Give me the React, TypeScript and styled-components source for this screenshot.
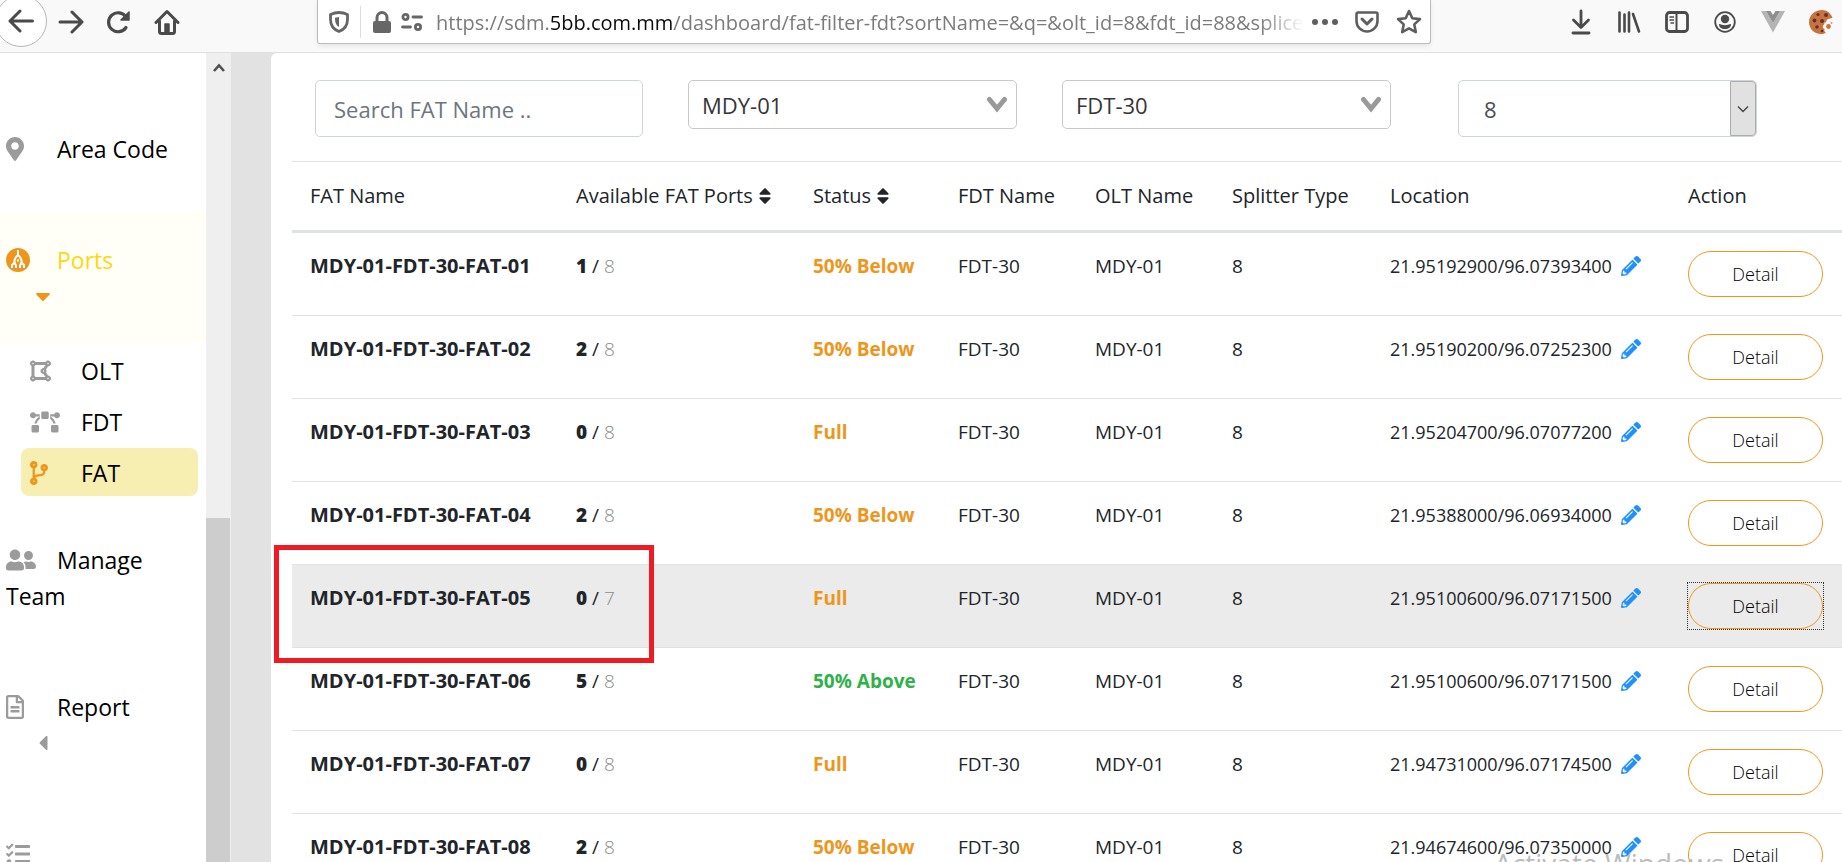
import React from "react";
import styled, { createGlobalStyle } from "styled-components";
import {
  FaBezierCurve,
  FaCaretDown,
  FaCaretLeft,
  FaCodeBranch,
  FaDrawPolygon,
  FaMapMarkerAlt,
  FaPencilAlt,
  FaRegFileAlt,
  FaSort,
  FaTasks,
  FaUserFriends,
} from "react-icons/fa";

const ORANGE = "#ee961c";
const GREEN = "#2fb14a";
const MUTED = "#9b9b9b";
const LINE = "#dee2e6";

const GlobalStyle = createGlobalStyle`
  *, *::before, *::after { box-sizing: border-box; }
  body {
    margin: 0;
    background: #fff;
    color: #212529;
    font-family: "Open Sans", "Noto Sans", sans-serif;
    font-size: 18px;
  }
  button, input, select { font: inherit; color: inherit; }
`;

const Window = styled.div`
  position: relative;
  display: flex;
  flex-direction: column;
  height: 100vh;
  overflow: hidden;
`;

/* ---------- Browser toolbar ---------- */

const Toolbar = styled.header`
  flex: none;
  display: flex;
  justify-content: space-between;
  height: 53px;
  background: #f9f9fa;
  border-bottom: 1px solid #e0e0e1;
`;

const NavButtons = styled.nav`
  flex: none;
  display: flex;
  align-items: center;
  width: 317px;
  height: 44px;
`;

const ToolButton = styled.button`
  flex: none;
  display: flex;
  align-items: center;
  justify-content: center;
  width: 48px;
  height: 44px;
  padding: 0;
  border: 0;
  background: none;
  color: #4a4a4b;
`;

const BackButton = styled(ToolButton)`
  width: 52px;
  height: 52px;
  margin: -2px 0 0 -5px;
  border: 1px solid #b6b6b7;
  border-radius: 50%;
  background: #fff;
`;

const UrlBar = styled.div`
  flex: 0 1 1114px;
  display: flex;
  align-items: center;
  min-width: 0;
  height: 44px;
  padding: 0 0 0 9px;
  border: 1px solid #bcbcbc;
  border-top: 0;
  border-radius: 0 0 3px 3px;
  background: #fff;
  box-shadow: 0 2px 5px rgba(0, 0, 0, 0.08);
  color: #666;
`;

const UrlIcon = styled.span`
  flex: none;
  display: flex;
  justify-content: center;
  width: ${(p: { $w?: number }) => p.$w ?? 24}px;
`;

const UrlDivider = styled.span`
  width: 1px;
  height: 32px;
  margin: 0 9px;
  background: #dcdcdc;
`;

const UrlText = styled.div`
  flex: 1;
  min-width: 0;
  margin-left: 6px;
  padding-top: 2px;
  overflow: hidden;
  white-space: nowrap;
  font-size: 20px;
  line-height: 28px;
  color: #7b7b7b;
  mask-image: linear-gradient(to right, #000 calc(100% - 44px), transparent);

  b {
    font-weight: 400;
    color: #0c0c0d;
  }
`;

const UrlButton = styled(ToolButton)`
  width: 42px;
  color: #5e5e5f;
`;

const ToolbarEnd = styled.div`
  flex: none;
  display: flex;
  align-items: center;
  width: 285px;
  height: 44px;
  margin-left: 126px;
`;

/* ---------- Page ---------- */

const Page = styled.div`
  flex: 1;
  display: flex;
  min-height: 0;
  background: #e2e2e2;
`;

const Sidebar = styled.aside`
  flex: none;
  width: 206px;
  padding-top: 47px;
  overflow: hidden;
  background: #fff;
`;

const Menu = styled.ul`
  margin: 0;
  padding: 0;
  list-style: none;
  display: flex;
  flex-direction: column;
  gap: 15px;
`;

const MenuLink = styled.a`
  display: block;
  padding: 31px 6px 29px;
  background: ${(p: { $active?: boolean }) => (p.$active ? "#fffff7" : "none")};
  color: ${(p: { $active?: boolean }) => (p.$active ? "#ffd60f" : "#000")};
  font-size: 23px;
  line-height: 36px;
  text-decoration: none;
`;

const MenuIcon = styled.span`
  display: inline-block;
  width: 51px;
  height: 24px;
  line-height: 0;
  vertical-align: -3px;
  color: ${(p: { $active?: boolean; $w?: number }) => (p.$active ? ORANGE : MUTED)};

  svg {
    width: ${(p) => p.$w ?? 24}px;
    height: 24px;
  }
`;

const MenuCaret = styled.span`
  display: flex;
  align-items: center;
  height: 36px;
  padding-left: 25px;
  font-size: 24px;
  color: ${(p: { $active?: boolean }) => (p.$active ? ORANGE : MUTED)};
`;

const SubMenu = styled.ul`
  margin: 0;
  padding: 3px 8px 0 21px;
  list-style: none;
  display: flex;
  flex-direction: column;
  gap: 3px;
`;

const SubLink = styled.a`
  display: block;
  height: 48px;
  padding: 7px 9px 5px;
  border-radius: 8px;
  background: ${(p: { $active?: boolean }) => (p.$active ? "#f7eeb1" : "none")};
  color: #000;
  font-size: 23px;
  line-height: 36px;
  text-decoration: none;
`;

const ScrollTrack = styled.div`
  flex: none;
  display: flex;
  flex-direction: column;
  align-items: center;
  justify-content: space-between;
  width: 25px;
  padding-top: 8px;
  background: #efefef;
`;

const ScrollThumb = styled.div`
  width: 24px;
  height: 43%;
  align-self: flex-start;
  background: #cdcdcd;
`;

const Content = styled.main`
  flex: 1;
  min-width: 0;
  margin-left: 40px;
  padding: 27px 0 0 21px;
  overflow: hidden;
  border-top-left-radius: 6px;
  background: #fff;
`;

const Filters = styled.form`
  display: grid;
  grid-template-columns: 328fr 329fr 329fr 321fr;
  align-items: start;
  gap: 45px;
  height: 81px;
  padding: 0 85px 0 23px;
`;

const Field = styled.label`
  position: relative;
  display: block;
  font-size: 22px;

  &:last-child {
    padding-left: 22px;
  }
`;

const SearchInput = styled.input`
  display: block;
  width: 100%;
  height: 57px;
  padding: 0 18px;
  border: 1px solid #ced4da;
  border-radius: 5px;
  background: #fff;

  &::placeholder {
    color: #6c757d;
    opacity: 1;
  }
`;

const Select = styled.select`
  display: block;
  width: 100%;
  height: ${(p: { $large?: boolean }) => (p.$large ? 57 : 49)}px;
  padding: ${(p: { $large?: boolean }) => (p.$large ? "0 25px" : "0 13px")};
  border: 1px solid ${(p: { $large?: boolean }) => (p.$large ? "#ced4da" : "#c8c8c8")};
  border-radius: 5px;
  background: #fff;
  color: ${(p: { $large?: boolean }) => (p.$large ? "#495057" : "#35353a")};
  appearance: none;
`;

const SelectChevron = styled.svg`
  position: absolute;
  right: 9px;
  top: 16px;
  pointer-events: none;
`;

const SelectArrow = styled.span`
  position: absolute;
  right: 1px;
  top: 1px;
  bottom: 1px;
  display: flex;
  align-items: center;
  justify-content: center;
  width: 26px;
  border: 1px solid #adadad;
  border-radius: 0 4px 4px 0;
  background: #e1e1e1;
  pointer-events: none;
`;

const TableArea = styled.section`
  position: relative;
`;

const Table = styled.table`
  width: 100%;
  table-layout: fixed;
  border-collapse: separate;
  border-spacing: 0;
  line-height: 30px;
`;

const HeadCell = styled.th`
  height: 72px;
  padding: 0 0 0 18px;
  border-top: 1px solid ${LINE};
  border-bottom: 3px solid ${LINE};
  font-size: 20px;
  font-weight: 400;
  text-align: left;
  white-space: nowrap;
`;

const SortButton = styled.button`
  display: inline-flex;
  align-items: center;
  gap: 2px;
  padding: 0;
  border: 0;
  background: none;
`;

const Row = styled.tr`
  background: ${(p: { $hovered?: boolean }) => (p.$hovered ? "#ebebeb" : "none")};
`;

const Cell = styled.td`
  height: 83px;
  padding: 18px 0 0 18px;
  border-bottom: 1px solid ${LINE};
  font-size: 19px;
  vertical-align: top;
  white-space: nowrap;
`;

const NameCell = styled(Cell)`
  font-size: 20px;
  font-weight: 700;
`;

const LocationCell = styled(Cell)`
  font-size: 18px;
`;

const Available = styled.b`
  font-weight: 800;
`;

const Total = styled.span`
  font-weight: 300;
  color: #8c8c8c;
`;

const Status = styled.span`
  font-weight: 700;
  color: ${(p: { $good: boolean }) => (p.$good ? GREEN : ORANGE)};
`;

const EditButton = styled.button`
  margin-left: 9px;
  padding: 0;
  border: 0;
  background: none;
  color: #1e90ff;
  font-size: 20px;
  line-height: 0;
  vertical-align: -3px;
`;

const DetailButton = styled.button`
  display: block;
  width: 135px;
  height: 46px;
  padding: 0;
  border: 1px solid ${ORANGE};
  border-radius: 23px;
  background: transparent;
  color: #000;
  font-size: 18px;
  font-weight: 300;
`;

const FocusRing = styled.div`
  width: 137px;
  margin: -1px;
  border: 1px dotted #333;
`;

const Highlight = styled.div`
  position: absolute;
  top: 384px;
  left: -18px;
  width: 380px;
  height: 118px;
  border: 5px solid #ef1b24;
  pointer-events: none;
`;

const Watermark = styled.div`
  position: absolute;
  right: 118px;
  bottom: -21px;
  font-size: 28px;
  line-height: 40px;
  color: rgba(130, 130, 130, 0.55);
  pointer-events: none;
`;

/* ---------- Icons ---------- */

const stroke = {
  fill: "none",
  stroke: "currentColor",
  strokeLinecap: "round" as const,
  strokeLinejoin: "round" as const,
};

const BackIcon = () => (
  <svg width="26" height="24" viewBox="0 0 26 24" {...stroke} strokeWidth="3">
    <path d="M24.500 12H2M12 2 2 12l10 10" />
  </svg>
);

const ForwardIcon = () => (
  <svg width="26" height="24" viewBox="0 0 26 24" {...stroke} strokeWidth="3">
    <path d="M2 12h22M14 2l10 10-10 10" />
  </svg>
);

const ReloadIcon = () => (
  <svg width="26" height="24" viewBox="0 0 26 24" {...stroke} strokeWidth="3.200">
    <path d="M20 17.500A9.500 9.500 0 1 1 20 7" />
    <path d="M23 2v8h-8z" fill="currentColor" strokeWidth="1.500" />
  </svg>
);

const HomeIcon = () => (
  <svg width="26" height="26" viewBox="0 0 26 26" {...stroke} strokeWidth="3">
    <path d="M2 13.500 13 2.500l11 11M5.500 12v10.500a2 2 0 0 0 2 2h11a2 2 0 0 0 2-2V12" />
    <path d="M11 23v-8h4v8z" fill="currentColor" strokeWidth="1.500" />
  </svg>
);

const ShieldIcon = () => (
  <svg width="20" height="22" viewBox="0 0 20 22" {...stroke} strokeWidth="2.800">
    <path d="M10 1.500c3 0 6 .8 8.500 2v5c0 6-3 10-8.500 12-5.500-2-8.500-6-8.500-12v-5c2.500-1.200 5.500-2 8.500-2z" />
    <path d="M10 6v10c-2.500-1.500-4-4-4-8V6.700z" fill="currentColor" stroke="none" />
  </svg>
);

const LockIcon = () => (
  <svg width="20" height="22" viewBox="0 0 20 22" {...stroke} strokeWidth="3">
    <path d="M5 11V6.500a5 5 0 0 1 10 0V11" />
    <rect x="1" y="10" width="18" height="12" rx="2" fill="currentColor" stroke="none" />
  </svg>
);

const PermissionsIcon = () => (
  <svg width="22" height="18" viewBox="0 0 22 18" {...stroke} strokeWidth="2.800">
    <circle cx="4.500" cy="4" r="2.600" />
    <path d="M12 4h8.500M1.500 14h8" />
    <circle cx="17" cy="14" r="2.600" />
  </svg>
);

const DotsIcon = () => (
  <svg width="26" height="6" viewBox="0 0 26 6" fill="currentColor">
    <circle cx="3" cy="3" r="3" />
    <circle cx="13" cy="3" r="3" />
    <circle cx="23" cy="3" r="3" />
  </svg>
);

const PocketIcon = () => (
  <svg width="24" height="22" viewBox="0 0 24 22" {...stroke} strokeWidth="2.600">
    <path d="M3 1.500h18a1.500 1.500 0 0 1 1.500 1.500v7a10.500 10.500 0 0 1-21 0V3A1.500 1.500 0 0 1 3 1.500z" />
    <path d="m7 8 5 5 5-5" strokeWidth="3" />
  </svg>
);

const StarIcon = () => (
  <svg width="26" height="25" viewBox="0 0 26 25" {...stroke} strokeWidth="2.600">
    <path d="m13 2 3.300 7.200 7.700.9-5.700 5.300 1.500 7.700-6.800-3.800-6.800 3.800 1.500-7.700L2 10.100l7.700-.9z" />
  </svg>
);

const DownloadIcon = () => (
  <svg width="22" height="26" viewBox="0 0 22 26" {...stroke} strokeWidth="2.800">
    <path d="M11 2v16M3.500 11l7.500 7.500 7.500-7.500M3 24h16" />
  </svg>
);

const LibraryIcon = () => (
  <svg width="24" height="24" viewBox="0 0 24 24" {...stroke} strokeWidth="2.600">
    <path d="M2.500 2.500v19M7.500 4.500v17M12 2.500v19M16 4l6 17.500" />
  </svg>
);

const SidebarIcon = () => (
  <svg width="24" height="22" viewBox="0 0 24 22" {...stroke} strokeWidth="2.800">
    <rect x="1.500" y="1.500" width="21" height="19" rx="3" />
    <path d="M11.500 2v18" strokeWidth="2" />
    <path d="M5 6h3.500M5 9h3.500M6 12h2.500" strokeWidth="1.500" />
  </svg>
);

const AccountIcon = () => (
  <svg width="22" height="22" viewBox="0 0 22 22" fill="currentColor">
    <circle cx="11" cy="11" r="9.800" fill="none" stroke="currentColor" strokeWidth="1.800" />
    <circle cx="11" cy="8" r="4.200" />
    <path d="M5 13c2 .3 3.500 1.200 6 1.200s4-.9 6-1.200c.3 3-2.500 5-6 5s-6.300-2-6-5z" />
  </svg>
);

const VueIcon = () => (
  <svg width="24" height="22" viewBox="0 0 24 22">
    <path d="M0 0h5l7 12 7-12h5L12 21.500z" fill="#b4b4b4" />
    <path d="M5 0h4.500L12 4l2.500-4H19l-7 12z" fill="#8e8e8e" />
  </svg>
);

const CookieIcon = () => (
  <svg width="24" height="26" viewBox="0 0 24 26">
    <path
      d="M13 1C5.500 1 0 6.500 0 13s5 12 12 12c2 0 3.500-.3 5-1.200-1.500-.8-2-2.300-1.500-3.800-1.500-.5-2-2-1.500-3.500 1-.5 1.500-1.500 1.500-3 1.500 0 2-.8 2-2.300 1.500-1.700 4-1.700 6-2.200C22 4.500 18 1 13 1z"
      fill="#c8733c"
    />
    <g fill="#5e3038">
      <circle cx="9" cy="5.500" r="1.600" />
      <circle cx="17" cy="6" r="2" />
      <circle cx="5.500" cy="11.500" r="1.900" />
      <circle cx="13" cy="12" r="2" />
      <circle cx="8" cy="18" r="1.800" />
      <circle cx="13" cy="22" r="1.300" />
    </g>
    <circle cx="19.500" cy="17.500" r="2.400" fill="#c8733c" />
    <circle cx="22.500" cy="14" r="1" fill="#d79a72" />
  </svg>
);

const PortsIcon = () => (
  <svg width="24" height="24" viewBox="0 0 24 24">
    <circle cx="12" cy="12" r="12" fill={ORANGE} />
    <g fill="none" stroke="#fff" strokeWidth="2">
      <path d="M12 2v6M10 9 8.500 12v3.500M14 9l1.500 3v3.500M10 9l2-2 2 2" />
      <path d="M12 11.500v2M8.500 14.500 6 17v3M8.500 14.500l1.500 3V20M15.500 14.500 18 17v3M15.500 14.500 14 17.500V20" />
    </g>
  </svg>
);

const ScrollUpIcon = () => (
  <svg width="12" height="14" viewBox="0 0 12 14" fill="none" stroke="#505050" strokeWidth="2.600">
    <path d="m1 10 5-5.500 5 5.500" />
  </svg>
);

const Chevron = () => (
  <SelectChevron width="22" height="18" viewBox="0 0 22 18" {...stroke} stroke="#999" strokeWidth="5">
    <path d="m3.500 3.500 7.500 9 7.500-9" strokeLinejoin="miter" />
  </SelectChevron>
);

const ThinArrow = () => (
  <svg width="12" height="8" viewBox="0 0 12 8" fill="none" stroke="#444" strokeWidth="1.400">
    <path d="m1 1.500 5 5 5-5" />
  </svg>
);

/* ---------- Data ---------- */

type Fat = {
  name: string;
  free: number;
  total: number;
  status: string;
  location: string;
  hovered?: boolean;
};

const fats: Fat[] = [
  { name: "MDY-01-FDT-30-FAT-01", free: 1, total: 8, status: "50% Below", location: "21.95192900/96.07393400" },
  { name: "MDY-01-FDT-30-FAT-02", free: 2, total: 8, status: "50% Below", location: "21.95190200/96.07252300" },
  { name: "MDY-01-FDT-30-FAT-03", free: 0, total: 8, status: "Full", location: "21.95204700/96.07077200" },
  { name: "MDY-01-FDT-30-FAT-04", free: 2, total: 8, status: "50% Below", location: "21.95388000/96.06934000" },
  { name: "MDY-01-FDT-30-FAT-05", free: 0, total: 7, status: "Full", location: "21.95100600/96.07171500", hovered: true },
  { name: "MDY-01-FDT-30-FAT-06", free: 5, total: 8, status: "50% Above", location: "21.95100600/96.07171500" },
  { name: "MDY-01-FDT-30-FAT-07", free: 0, total: 8, status: "Full", location: "21.94731000/96.07174500" },
  { name: "MDY-01-FDT-30-FAT-08", free: 2, total: 8, status: "50% Below", location: "21.94674600/96.07350000" },
];

const columnWidths = [266, 237, 145, 137, 137, 158, 298, 172];

const tools = [
  { label: "Downloads", icon: <DownloadIcon /> },
  { label: "Library", icon: <LibraryIcon /> },
  { label: "Sidebars", icon: <SidebarIcon /> },
  { label: "Account", icon: <AccountIcon /> },
  { label: "Vue devtools", icon: <VueIcon /> },
  { label: "Cookies", icon: <CookieIcon /> },
];

const BrowserToolbar = () => (
  <Toolbar>
    <NavButtons aria-label="Browser">
      <BackButton aria-label="Back"><BackIcon /></BackButton>
      <ToolButton aria-label="Forward"><ForwardIcon /></ToolButton>
      <ToolButton aria-label="Reload"><ReloadIcon /></ToolButton>
      <ToolButton aria-label="Home"><HomeIcon /></ToolButton>
    </NavButtons>
    <UrlBar>
      <UrlIcon><ShieldIcon /></UrlIcon>
      <UrlDivider />
      <UrlIcon><LockIcon /></UrlIcon>
      <UrlIcon $w={36}><PermissionsIcon /></UrlIcon>
      <UrlText role="textbox" aria-label="Address">
        https://sdm.<b>5bb.com.mm</b>
        /dashboard/fat-filter-fdt?sortName=&amp;q=&amp;olt_id=8&amp;fdt_id=88&amp;splice
      </UrlText>
      <UrlButton aria-label="Page actions"><DotsIcon /></UrlButton>
      <UrlButton aria-label="Save to Pocket"><PocketIcon /></UrlButton>
      <UrlButton aria-label="Bookmark"><StarIcon /></UrlButton>
    </UrlBar>
    <ToolbarEnd>
      {tools.map((t) => (
        <ToolButton key={t.label} aria-label={t.label}>{t.icon}</ToolButton>
      ))}
    </ToolbarEnd>
  </Toolbar>
);

const SideMenu = () => (
  <Sidebar>
    <Menu>
      <li>
        <MenuLink href="#area-code">
          <MenuIcon $w={18}><FaMapMarkerAlt /></MenuIcon>Area Code
        </MenuLink>
      </li>
      <li>
        <MenuLink href="#ports" $active>
          <MenuIcon $active><PortsIcon /></MenuIcon>Ports
          <MenuCaret $active><FaCaretDown /></MenuCaret>
        </MenuLink>
        <SubMenu>
          <li>
            <SubLink href="#olt"><MenuIcon $w={21}><FaDrawPolygon /></MenuIcon>OLT</SubLink>
          </li>
          <li>
            <SubLink href="#fdt"><MenuIcon $w={30}><FaBezierCurve /></MenuIcon>FDT</SubLink>
          </li>
          <li>
            <SubLink href="#fat" $active><MenuIcon $active $w={18}><FaCodeBranch /></MenuIcon>FAT</SubLink>
          </li>
        </SubMenu>
      </li>
      <li>
        <MenuLink href="#team">
          <MenuIcon $w={30}><FaUserFriends /></MenuIcon>Manage Team
        </MenuLink>
      </li>
      <li>
        <MenuLink href="#report">
          <MenuIcon $w={18}><FaRegFileAlt /></MenuIcon>Report
          <MenuCaret><FaCaretLeft /></MenuCaret>
        </MenuLink>
      </li>
      <li>
        <MenuLink href="#tasks" aria-label="Tasks">
          <MenuIcon><FaTasks /></MenuIcon>
        </MenuLink>
      </li>
    </Menu>
  </Sidebar>
);

const FilterBar = () => (
  <Filters>
    <Field>
      <SearchInput type="text" aria-label="Search FAT name" placeholder="Search FAT Name .." />
    </Field>
    <Field>
      <Select aria-label="OLT" defaultValue="MDY-01"><option>MDY-01</option></Select>
      <Chevron />
    </Field>
    <Field>
      <Select aria-label="FDT" defaultValue="FDT-30"><option>FDT-30</option></Select>
      <Chevron />
    </Field>
    <Field>
      <Select $large aria-label="Splitter type" defaultValue="8"><option>8</option></Select>
      <SelectArrow><ThinArrow /></SelectArrow>
    </Field>
  </Filters>
);

const FatRow = ({ fat }: { fat: Fat }) => {
  const detail = <DetailButton>Detail</DetailButton>;
  return (
    <Row $hovered={fat.hovered}>
      <NameCell>{fat.name}</NameCell>
      <Cell>
        <Available>{fat.free}</Available> / <Total>{fat.total}</Total>
      </Cell>
      <Cell>
        <Status $good={fat.status === "50% Above"}>{fat.status}</Status>
      </Cell>
      <Cell>FDT-30</Cell>
      <Cell>MDY-01</Cell>
      <Cell>8</Cell>
      <LocationCell>
        {fat.location}
        <EditButton aria-label={`Edit location of ${fat.name}`}><FaPencilAlt /></EditButton>
      </LocationCell>
      <Cell>{fat.hovered ? <FocusRing>{detail}</FocusRing> : detail}</Cell>
    </Row>
  );
};

export default function App() {
  return (
    <Window>
      <GlobalStyle />
      <BrowserToolbar />
      <Page>
        <SideMenu />
        <ScrollTrack>
          <ScrollUpIcon />
          <ScrollThumb />
        </ScrollTrack>
        <Content>
          <FilterBar />
          <TableArea>
            <Table>
              <colgroup>
                {columnWidths.map((w, i) => (
                  <col key={i} width={w} />
                ))}
              </colgroup>
              <thead>
                <tr>
                  <HeadCell>FAT Name</HeadCell>
                  <HeadCell><SortButton>Available FAT Ports <FaSort /></SortButton></HeadCell>
                  <HeadCell><SortButton>Status <FaSort /></SortButton></HeadCell>
                  <HeadCell>FDT Name</HeadCell>
                  <HeadCell>OLT Name</HeadCell>
                  <HeadCell>Splitter Type</HeadCell>
                  <HeadCell>Location</HeadCell>
                  <HeadCell>Action</HeadCell>
                </tr>
              </thead>
              <tbody>
                {fats.map((fat) => (
                  <FatRow key={fat.name} fat={fat} />
                ))}
              </tbody>
            </Table>
            <Highlight />
          </TableArea>
        </Content>
      </Page>
      <Watermark>Activate Windows</Watermark>
    </Window>
  );
}
